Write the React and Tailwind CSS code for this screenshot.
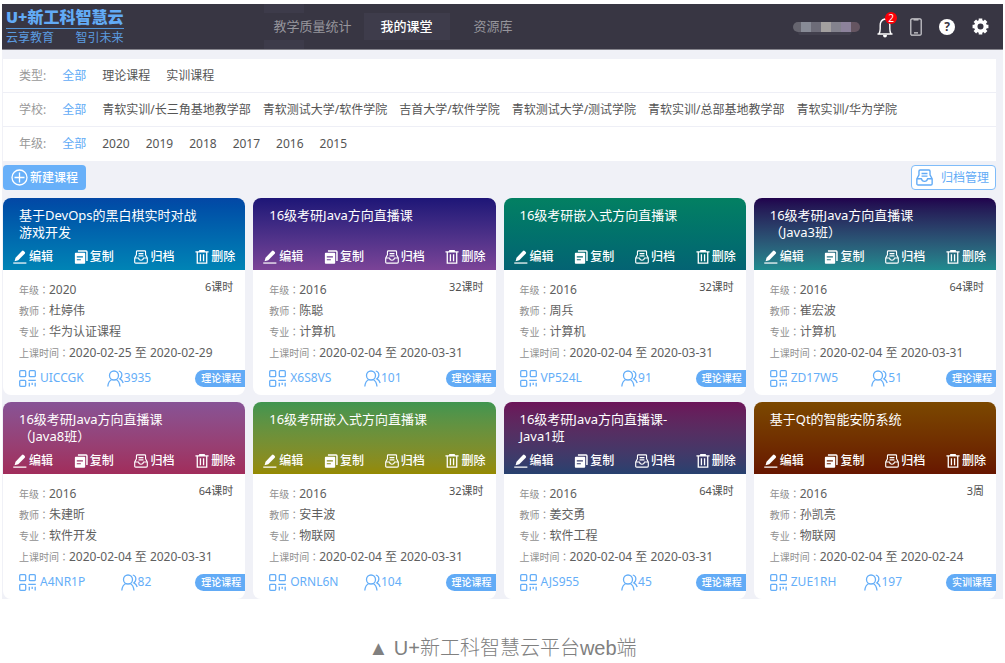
import React from "react";

const filters = [
  { label: "类型:", gap: "gap-4", options: ["理论课程", "实训课程"] },
  {
    label: "学校:",
    gap: "gap-3",
    options: [
      "青软实训/长三角基地教学部",
      "青软测试大学/软件学院",
      "吉首大学/软件学院",
      "青软测试大学/测试学院",
      "青软实训/总部基地教学部",
      "青软实训/华为学院",
    ],
  },
  { label: "年级:", gap: "gap-4", options: ["2020", "2019", "2018", "2017", "2016", "2015"] },
];

const courses = [
  { title: ["基于DevOps的黑白棋实时对战", "游戏开发"], tone: "from-[#0347a5] to-[#0084b5]", year: "2020", hours: "6课时", teacher: "杜婷伟", major: "华为认证课程", start: "2020-02-25", end: "2020-02-29", code: "UICCGK", people: "3935", type: "理论课程" },
  { title: ["16级考研Java方向直播课"], tone: "from-[#1e1577] to-[#7b4397]", year: "2016", hours: "32课时", teacher: "陈聪", major: "计算机", start: "2020-02-04", end: "2020-03-31", code: "X6S8VS", people: "101", type: "理论课程" },
  { title: ["16级考研嵌入式方向直播课"], tone: "from-[#038062] to-[#046373]", year: "2016", hours: "32课时", teacher: "周兵", major: "计算机", start: "2020-02-04", end: "2020-03-31", code: "VP524L", people: "91", type: "理论课程" },
  { title: ["16级考研Java方向直播课", "（Java3班）"], tone: "from-[#20024d] to-[#1f8b8f]", year: "2016", hours: "64课时", teacher: "崔宏波", major: "计算机", start: "2020-02-04", end: "2020-03-31", code: "ZD17W5", people: "51", type: "理论课程" },
  { title: ["16级考研Java方向直播课", "（Java8班）"], tone: "from-[#875396] to-[#a12c5b]", year: "2016", hours: "64课时", teacher: "朱建昕", major: "软件开发", start: "2020-02-04", end: "2020-03-31", code: "A4NR1P", people: "82", type: "理论课程" },
  { title: ["16级考研嵌入式方向直播课"], tone: "from-[#3f9550] to-[#958a00]", year: "2016", hours: "32课时", teacher: "安丰波", major: "物联网", start: "2020-02-04", end: "2020-03-31", code: "ORNL6N", people: "104", type: "理论课程" },
  { title: ["16级考研Java方向直播课-", "Java1班"], tone: "from-[#6c1459] to-[#27416f]", year: "2016", hours: "64课时", teacher: "姜交勇", major: "软件工程", start: "2020-02-04", end: "2020-03-31", code: "AJS955", people: "45", type: "理论课程" },
  { title: ["基于Qt的智能安防系统"], tone: "from-[#7b4800] to-[#671600]", year: "2016", hours: "3周", teacher: "孙凯亮", major: "物联网", start: "2020-02-04", end: "2020-02-24", code: "ZUE1RH", people: "197", type: "实训课程" },
];

function Svg({ children, className, viewBox = "0 0 16 16" }) {
  return (
    <svg aria-hidden="true" viewBox={viewBox} fill="none" stroke="currentColor" className={`shrink-0 ${className}`}>
      {children}
    </svg>
  );
}

const EditIcon = () => (
  <Svg className="h-3.5 w-3.5">
    <path d="M1.800 12.800 2.900 8.900 10.200 1q1-.9 2 0l1.200 1.200q.9 1 0 2L6 11.700Z" fill="currentColor" stroke="none" />
    <path d="M.3 14.900h15" strokeWidth="1.400" />
  </Svg>
);

const CopyIcon = () => (
  <Svg className="h-3.5 w-3.5">
    <path d="M4.500 1.200h9.300q1 0 1 1v10.300" strokeWidth="1.700" />
    <path d="M2 3.200h9.800q1 0 1 1v10.400q0 1-1 1H2q-1 0-1-1V4.200q0-1 1-1ZM3.200 7.200v1.300h7V7.200Zm0 3.300v1.300h4.600v-1.300Z" fill="currentColor" fillRule="evenodd" stroke="none" />
  </Svg>
);

const ArchiveIcon = ({ className }) => (
  <Svg className={className}>
    <path d="M.8 9.200 2.800 5.500V2q0-1 1-1h8.400q1 0 1 1v3.500l2 3.700v4.600q0 1.200-1.200 1.200H2q-1.200 0-1.200-1.200ZM.8 9.200h4.400q.3 2.500 2.800 2.500t2.800-2.500h4.400M5.200 4.200h5.600M5.200 6.700h5.600" strokeWidth="1.300" strokeLinejoin="round" />
  </Svg>
);

const TrashIcon = () => (
  <Svg className="h-3.5 w-3.5">
    <path d="M.5 2.200h15M5.500 2.200V.8h5v1.400M2.600 2.200v12.800h10.800V2.200M6.200 4.800v8M9.800 4.800v8" strokeWidth="1.500" />
  </Svg>
);

const QrIcon = () => (
  <Svg className="h-[17px] w-[17px]" viewBox="0 0 17 17">
    <rect x=".7" y=".7" width="6" height="6" rx="1" strokeWidth="1.300" />
    <rect x="10.300" y=".7" width="6" height="6" rx="1" strokeWidth="1.300" />
    <rect x=".7" y="10.300" width="6" height="6" rx="1" strokeWidth="1.300" />
    <path d="M9.300 10.300h7.500M10.300 12.800v3.700M13.200 12.800v2.200M16.200 12.800v3.700" strokeWidth="1.300" />
  </Svg>
);

const PeopleIcon = () => (
  <Svg className="h-[17px] w-[17px]" viewBox="0 0 17 17">
    <circle cx="7" cy="5.500" r="4.500" strokeWidth="1.300" />
    <path d="M.8 16.500q.5-5.400 4-7M9.200 9.500q3.200 1.600 3.800 7M11.800 1q3.500 1.100 3 4.700-.3 2.200-1.900 3.100 2.500 1 3.300 4.200" strokeWidth="1.300" />
  </Svg>
);

function Field({ label, children }) {
  return (
    <div className="flex h-[21px] items-center leading-[21px]">
      <dt className="text-[10px] text-[#909090]">
        {label}
        <span className="font-['Noto_Sans_CJK_TC',sans-serif]">：</span>
      </dt>
      <dd className="text-xs text-[#606060]">{children}</dd>
    </div>
  );
}

function Action({ icon, children }) {
  return (
    <button type="button" className="flex items-center gap-0.5 text-xs font-medium leading-4 text-white">
      {icon}
      {children}
    </button>
  );
}

function CourseCard({ course }) {
  return (
    <article className="overflow-hidden rounded-lg bg-white">
      <header className={`flex h-[72px] flex-col justify-between bg-linear-to-b pt-[9px] pb-[5px] ${course.tone}`}>
        <h2 className="px-4 text-[13px] leading-[17px] font-normal text-white">
          {course.title.map((line) => (
            <span key={line} className="block whitespace-nowrap">{line}</span>
          ))}
        </h2>
        <div className="flex justify-between px-2.5">
          <Action icon={<EditIcon />}>编辑</Action>
          <Action icon={<CopyIcon />}>复制</Action>
          <Action icon={<ArchiveIcon className="h-3.5 w-3.5" />}>归档</Action>
          <Action icon={<TrashIcon />}>删除</Action>
        </div>
      </header>
      <div className="flex justify-between pt-[9px] pr-3 pl-4">
        <dl>
          <Field label="年级">{course.year}</Field>
          <Field label="教师">{course.teacher}</Field>
          <Field label="专业">{course.major}</Field>
          <Field label="上课时间">{course.start} 至 {course.end}</Field>
        </dl>
        <span className="-ml-12 h-4 text-[11px] leading-4 text-[#505050]">{course.hours}</span>
      </div>
      <footer className="flex h-8 items-center pb-0.5 pl-4 text-xs text-[#65aef8]">
        <span className="flex items-center gap-1">
          <QrIcon />
          {course.code}
        </span>
        <span className="ml-auto flex items-center">
          <PeopleIcon />
          {course.people}
        </span>
        <span className="ml-11 rounded-l-full bg-[#62abf6] pr-1 pl-1.5 text-[10px] leading-[17px] font-medium text-white">{course.type}</span>
      </footer>
    </article>
  );
}

export default function App() {
  return (
    <div className="min-h-screen bg-white font-['Noto_Sans','Noto_Sans_CJK_SC',sans-serif]">
      <div className="mx-0.5 bg-[#f0f1f7]">
        <div className="h-1 bg-white" />
        <header className="flex h-[46px] items-center border-b border-[#85848c] bg-[#383643]">
          <a href="#home" className="ml-1 block text-[#62abf6]">
            <span className="block border-b border-[#5596d8] text-base leading-[22px] font-black whitespace-nowrap">U+新工科智慧云</span>
            <span className="flex justify-between text-xs leading-[18px] text-[#5b9be0]">
              <span>云享教育</span>
              <span>智引未来</span>
            </span>
          </a>
          <nav className="relative ml-[140px] flex h-full items-center gap-3 text-[13px] leading-[27px] text-[#96959c]">
            <span className="absolute inset-y-0 left-0 w-10 bg-[#3d3b4a]" />
            <a href="#stats" className="relative bg-[#383643] pl-2.5">教学质量统计</a>
            <a href="#classes" className="bg-[#3e3c4b] px-[17px] font-medium text-white">我的课堂</a>
            <a href="#resources" className="px-3">资源库</a>
          </nav>
          <div className="mr-3.5 ml-auto flex items-center gap-[17px] text-white">
            <Svg className="h-4 w-[68px]" viewBox="0 0 68 16">
              <g stroke="none">
                <path d="M6 3h4v10H6a5 5 0 0 1 0-10Z" fill="#66656f" />
                <path d="M9 3h10v10H9z" fill="#888b96" />
                <path d="M19 3h10v10H19z" fill="#6d6c78" />
                <path d="M29 3h10v10H29z" fill="#a3a09f" />
                <path d="M39 3h10v10H39z" fill="#83828d" />
                <path d="M49 3h10v10H49z" fill="#8c829b" />
                <path d="M59 3h4a5 5 0 0 1 0 10h-4z" fill="#655561" />
                <path d="M6 13h54q-2 5-8 5H12q-5 0-6-5Z" fill="#42404d" />
              </g>
            </Svg>
            <button type="button" aria-label="消息" className="relative">
              <Svg className="h-[22px] w-4" viewBox="0 0 16 22">
                <path d="M.5 18h15M2 17.800q1.200-2 1.200-5V9.500q0-5.500 4.800-6.500 4.800 1 4.800 6.500v3.300q0 3 1.200 5" strokeWidth="1.400" />
                <path d="M6 19h4q0 2.500-2 2.500T6 19Z" fill="currentColor" stroke="none" />
              </Svg>
              <span className="absolute -top-1 -right-1 h-3 w-3 rounded-full bg-[#fb0007] text-[10px] leading-3">2</span>
            </button>
            <button type="button" aria-label="手机端" className="text-[#d0d0d4]">
              <Svg className="h-[18px] w-3" viewBox="0 0 12 18">
                <rect x=".8" y=".8" width="10.400" height="16.400" rx="1.200" strokeWidth="1.200" />
                <path d="M3.500 1.800h5M4 14.800h4" strokeWidth="1.200" />
              </Svg>
            </button>
            <button type="button" aria-label="帮助" className="h-4 w-4 rounded-full bg-white text-xs leading-4 font-bold text-[#383643]">?</button>
            <button type="button" aria-label="设置">
              <Svg className="h-[17px] w-[17px]" viewBox="0 0 18 18">
                <circle cx="9" cy="9" r="5" strokeWidth="3.600" />
                <path d="M9 .6v3M9 14.400v3M.6 9h3M14.400 9h3M3 3l2.100 2.100M12.900 12.900l2.100 2.100M3 15l2.100-2.100M12.900 5.100 15 3" strokeWidth="3.800" />
              </Svg>
            </button>
          </div>
        </header>

        <main className="pt-[9px] pr-[7px] pl-px">
          <section className="divide-y divide-[#eeeff6] bg-white">
            {filters.map((row) => (
              <div key={row.label} className="flex h-[34px] items-center gap-4 pl-4 text-xs text-[#555]">
                <span className="text-[#999]">{row.label}</span>
                <button type="button" className="text-[#62abf6]">全部</button>
                <div className={`flex items-center ${row.gap}`}>
                  {row.options.map((option) => (
                    <button key={option} type="button" className="whitespace-nowrap">{option}</button>
                  ))}
                </div>
              </div>
            ))}
          </section>

          <div className="flex justify-between pt-1 pb-2">
            <button type="button" className="flex h-[25px] items-center gap-0.5 rounded bg-[#68b0f9] px-2 text-xs font-medium text-white">
              <Svg className="h-[17px] w-[17px]" viewBox="0 0 17 17">
                <circle cx="8.500" cy="8.500" r="7.500" strokeWidth="1.300" />
                <path d="M3.500 8.500h10M8.500 3.500v10" strokeWidth="1.300" />
              </Svg>
              新建课程
            </button>
            <button type="button" className="flex h-[25px] items-center gap-2 rounded border border-[#7fbcf9] bg-white px-1 text-xs text-[#62abf6]">
              <ArchiveIcon className="h-[17px] w-[17px]" />
              <span className="pr-0.5">归档管理</span>
            </button>
          </div>

          <section className="grid grid-cols-4 gap-x-2 gap-y-[7px]">
            {courses.map((course) => (
              <CourseCard key={course.code} course={course} />
            ))}
          </section>
        </main>
      </div>
      <p className="pt-[34px] text-center font-['Liberation_Sans','Noto_Sans_CJK_SC',sans-serif] text-xl leading-[30px] font-light text-[#808080]">▲ U+新工科智慧云平台web端</p>
    </div>
  );
}
